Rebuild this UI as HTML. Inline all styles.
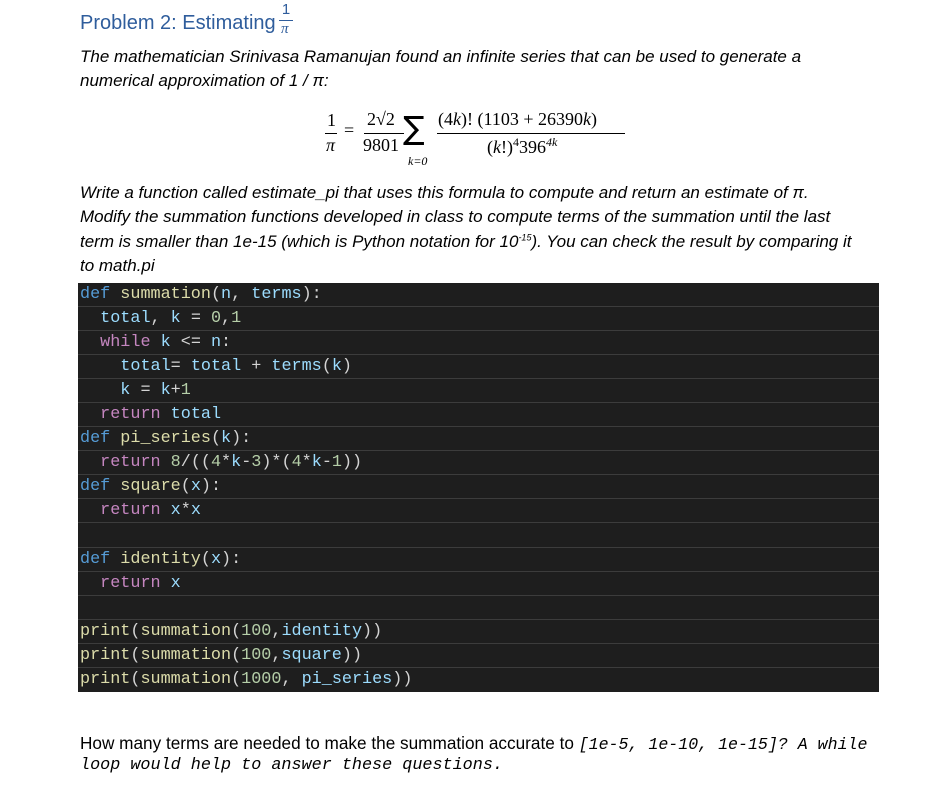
<!DOCTYPE html>
<html><head><meta charset="utf-8"><style>
body{margin:0;width:935px;height:808px;background:#fff;position:relative;font-family:"Liberation Sans",sans-serif;overflow:hidden}
.a{position:absolute;white-space:nowrap}
.t{font-size:17px;font-style:italic;color:#000}
#code{position:absolute;left:78px;top:283px;width:801px;height:409px;background:#1e1e1e}
.r{height:23.06px;border-bottom:1px solid #3c3c3c;font-family:"Liberation Mono",monospace;font-size:16.8px;line-height:23px;color:#d4d4d4;white-space:pre;padding-left:2px}
.k{color:#569cd6}.f{color:#dcdcaa}.p{color:#9cdcfe}.n{color:#b5cea8}.c{color:#c586c0}
.m{font-family:"Liberation Serif",serif;font-size:18px}
</style></head><body>
<div class="a" style="left:80px;top:12px;font-size:20px;color:#2f5d9c">Problem 2: Estimating</div>
<div class="a" style="left:280px;top:1px;font-size:15px;color:#2f5d9c;text-align:center;width:12px">1</div>
<div class="a" style="left:279px;top:20px;width:14px;border-top:1px solid #2f5d9c"></div>
<div class="a" style="left:281px;top:21px;font-size:15px;color:#2f5d9c;font-family:'Liberation Serif',serif;font-style:italic">π</div>
<div class="a t" style="left:80px;top:47px">The mathematician Srinivasa Ramanujan found an infinite series that can be used to generate a</div>
<div class="a t" style="left:80px;top:71px">numerical approximation of 1 / π:</div>

<div class="a m" style="left:327px;top:110px">1</div>
<div class="a" style="left:325px;top:133px;width:12px;border-top:1px solid #000"></div>
<div class="a m" style="left:326px;top:135px;font-style:italic">π</div>
<div class="a m" style="left:344px;top:120px">=</div>
<div class="a m" style="left:367px;top:109px">2√2</div>
<div class="a" style="left:364px;top:133px;width:40px;border-top:1px solid #000"></div>
<div class="a m" style="left:363px;top:135px">9801</div>
<div class="a" style="left:403px;top:109px;font-size:32px;font-family:'DejaVu Sans',sans-serif">∑</div>
<div class="a" style="left:408px;top:154px;font-size:12px;font-style:italic;font-family:'Liberation Serif',serif">k=0</div>
<div class="a m" style="left:438px;top:109px">(4<i>k</i>)! (1103 + 26390<i>k</i>)</div>
<div class="a" style="left:437px;top:133px;width:188px;border-top:1px solid #000"></div>
<div class="a m" style="left:487px;top:135px">(<i>k</i>!)<sup style="font-size:12px">4</sup>396<sup style="font-size:12px"><i>4k</i></sup></div>

<div class="a t" style="left:80px;top:183px">Write a function called estimate_pi that uses this formula to compute and return an estimate of π.</div>
<div class="a t" style="left:80px;top:207px">Modify the summation functions developed in class to compute terms of the summation until the last</div>
<div class="a t" style="left:80px;top:232px">term is smaller than 1e-15 (which is Python notation for 10<sup style="font-size:9px">-15</sup>). You can check the result by comparing it</div>
<div class="a t" style="left:80px;top:256px">to math.pi</div>

<div id="code">
<div class="r"><span class="k">def</span> <span class="f">summation</span>(<span class="p">n</span>, <span class="p">terms</span>):</div>
<div class="r">  <span class="p">total</span>, <span class="p">k</span> = <span class="n">0</span>,<span class="n">1</span></div>
<div class="r">  <span class="c">while</span> <span class="p">k</span> &lt;= <span class="p">n</span>:</div>
<div class="r">    <span class="p">total</span>= <span class="p">total</span> + <span class="p">terms</span>(<span class="p">k</span>)</div>
<div class="r">    <span class="p">k</span> = <span class="p">k</span>+<span class="n">1</span></div>
<div class="r">  <span class="c">return</span> <span class="p">total</span></div>
<div class="r"><span class="k">def</span> <span class="f">pi_series</span>(<span class="p">k</span>):</div>
<div class="r">  <span class="c">return</span> <span class="n">8</span>/((<span class="n">4</span>*<span class="p">k</span>-<span class="n">3</span>)*(<span class="n">4</span>*<span class="p">k</span>-<span class="n">1</span>))</div>
<div class="r"><span class="k">def</span> <span class="f">square</span>(<span class="p">x</span>):</div>
<div class="r">  <span class="c">return</span> <span class="p">x</span>*<span class="p">x</span></div>
<div class="r"> </div>
<div class="r"><span class="k">def</span> <span class="f">identity</span>(<span class="p">x</span>):</div>
<div class="r">  <span class="c">return</span> <span class="p">x</span></div>
<div class="r"> </div>
<div class="r"><span class="f">print</span>(<span class="f">summation</span>(<span class="n">100</span>,<span class="p">identity</span>))</div>
<div class="r"><span class="f">print</span>(<span class="f">summation</span>(<span class="n">100</span>,<span class="p">square</span>))</div>
<div class="r" style="border:none"><span class="f">print</span>(<span class="f">summation</span>(<span class="n">1000</span>, <span class="p">pi_series</span>))</div>
</div>

<div class="a" style="left:80px;top:733px;font-size:17.2px">How many terms are needed to make the summation accurate to <span style="font-family:'Liberation Mono',monospace;font-size:16.6px;font-style:italic">[1e-5, 1e-10, 1e-15]? A while</span></div>
<div class="a" style="left:80px;top:756px;font-family:'Liberation Mono',monospace;font-size:16.8px;font-style:italic">loop would help to answer these questions.</div>
</body></html>
